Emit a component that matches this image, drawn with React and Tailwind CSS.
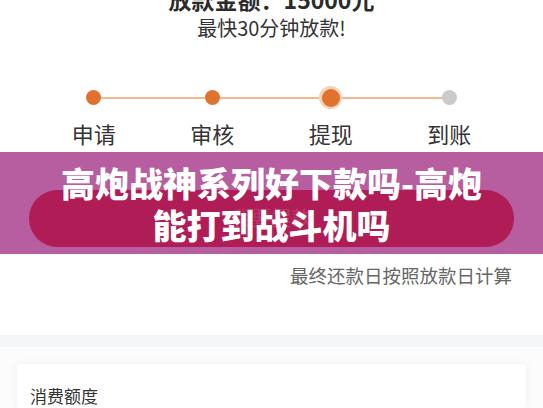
import React from "react";

const steps = [
    { label: "申请", state: "done" },
    { label: "审核", state: "done" },
    { label: "提现", state: "active" },
    { label: "到账", state: "todo" },
];

function Dot({ state }) {
    if (state === "active") {
        return (
            <span className="flex items-center justify-center w-[23px] h-[23px] rounded-full bg-[#f6d2b6]">
                <span className="w-[18px] h-[18px] rounded-full bg-[#e0722f]" />
            </span>
        );
    }
    return (
        <span
            className={
                state === "done"
                    ? "w-[15px] h-[15px] rounded-full bg-[#e0722f]"
                    : "w-[15px] h-[15px] rounded-full bg-[#cacaca]"
            }
        />
    );
}

export default function App() {
    return (
        <div
            className="w-[543px] h-[408px] overflow-hidden bg-white flex flex-col"
            style={{ fontFamily: '"Noto Sans CJK SC", "Noto Sans", sans-serif' }}
        >
            {/* loan amount + progress */}
            <div className="h-[152px] flex flex-col items-center">
                <p className="-mt-[12px] text-[23px] leading-[23px] font-bold text-[#2b2b2b]">
                    放款金额：15000元
                </p>
                <p className="mt-[4px] text-[20px] leading-[26px] text-[#333]">最快30分钟放款!</p>

                <div className="relative mt-[45px] w-[474px] grid grid-cols-4">
                    <div className="absolute left-[59px] right-[59px] top-[11px] h-[2px] bg-[#f2b88e]" />
                    {steps.map((s) => (
                        <div key={s.label} className="relative flex flex-col items-center">
                            <div className="h-[23px] flex items-center">
                                <Dot state={s.state} />
                            </div>
                            <span className="mt-[10px] text-[22px] leading-[28px] text-[#333]">{s.label}</span>
                        </div>
                    ))}
                </div>
            </div>

            {/* promo banner over the withdraw button */}
            <div className="relative h-[103px] bg-[#b75ea0] px-[29px] pt-[38px]">
                <div className="h-[57px] rounded-full bg-[#b01c56] flex items-center justify-center">
                    <span className="text-[20px] text-white/15">我要提款</span>
                </div>
                <div className="absolute inset-x-0 top-[10px] text-center text-white font-black text-[34px] leading-[42px]">
                    高炮战神系列好下款吗-高炮
                    <br />
                    能打到战斗机吗
                </div>
            </div>

            <div className="h-[81px] flex justify-end pr-[31px] pt-[8px]">
                <span className="text-[18.5px] leading-[26px] text-[#666]">最终还款日按照放款日计算</span>
            </div>

            <div className="h-[12px] bg-[#f5f6f8]" />

            {/* quota card */}
            <div className="flex-1 bg-[#fcfcfc] px-[17px] pt-[17px]">
                <div className="h-full rounded-[4px] bg-white shadow-[0_0_8px_rgba(0,0,0,0.06)] px-[13px] pt-[20px]">
                    <span className="text-[17px] leading-[24px] text-[#333]">消费额度</span>
                </div>
            </div>
        </div>
    );
}
